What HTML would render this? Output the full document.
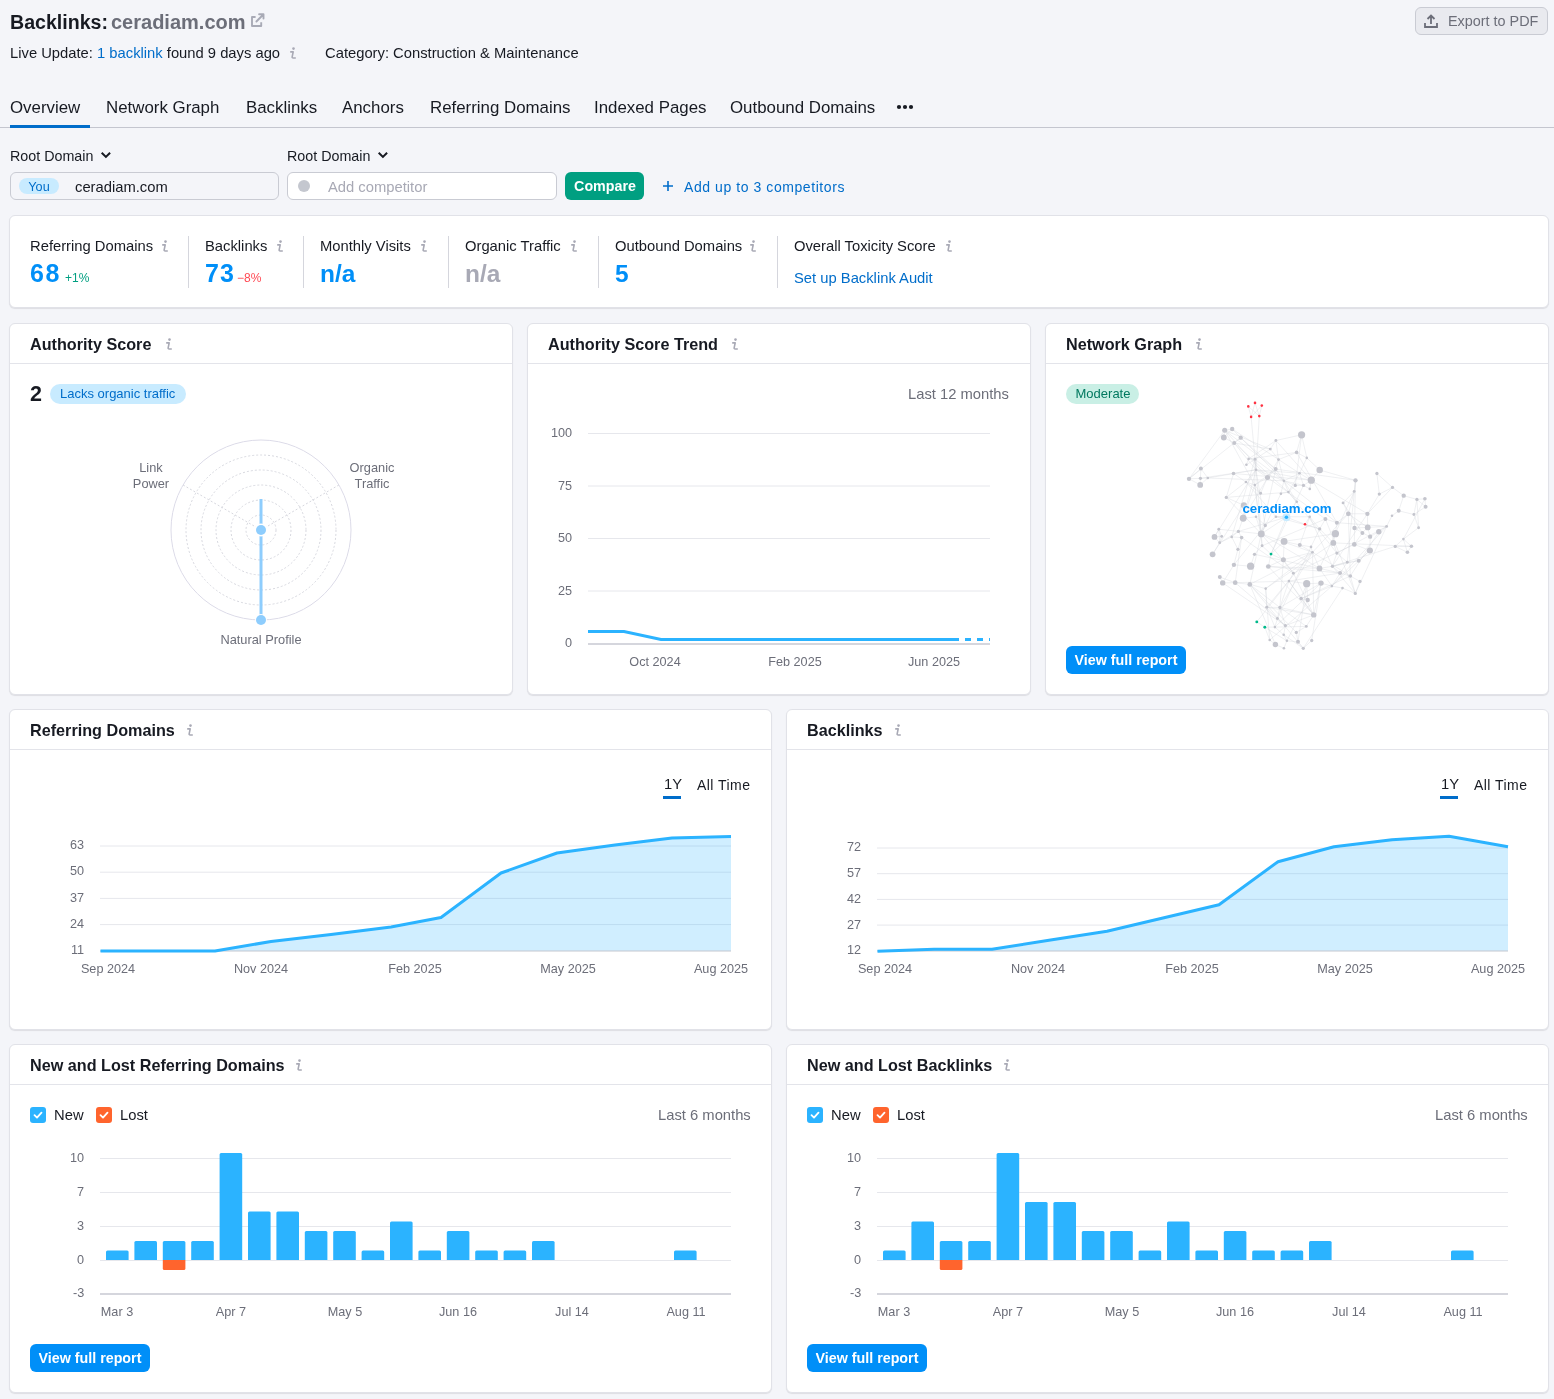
<!DOCTYPE html><html><head><meta charset="utf-8"><style>
html,body{margin:0;padding:0;}
body{width:1554px;height:1399px;background:#f4f5f9;position:relative;overflow:hidden;font-family:"Liberation Sans",sans-serif;}
.t{position:absolute;white-space:nowrap;will-change:transform;}
.a{position:absolute;}
.card{position:absolute;background:#fff;border:1px solid #e1e2e8;border-radius:6px;box-shadow:0 1px 1px rgba(25,27,35,0.10);}
</style></head><body>
<div class="t" style="left:10px;top:10.71px;font-size:19.60px;line-height:23px;color:#171a22;font-weight:700;letter-spacing:0.0px;">Backlinks:</div>
<div class="t" style="left:111px;top:10.57px;font-size:20.00px;line-height:23px;color:#6c6e79;font-weight:700;letter-spacing:0.0px;">ceradiam.com</div>
<svg class="a" style="left:245px;top:8px" width="25" height="22" viewBox="245 8 25 22"><path d="M255.6 17 H252 V26 H261.2 V22.3" fill="none" stroke="#a8aab6" stroke-width="1.9" stroke-linejoin="round"/><path d="M256.4 21.5 L262.8 15 M259.1 14.3 H263.5 V18.6" fill="none" stroke="#a8aab6" stroke-width="1.9" stroke-linecap="round" stroke-linejoin="round"/></svg>
<div class="t" style="left:10px;top:45.38px;font-size:14.77px;line-height:17px;color:#171a22;font-weight:400;letter-spacing:0.0px;">Live Update: <span style="color:#006dca">1 backlink</span> found 9 days ago</div>
<svg class="a" style="left:289px;top:47px" width="9" height="13" viewBox="-1 0 9 13"><circle cx="3.5" cy="1.6" r="1.3" fill="#a8a9b5"/><path d="M0.2 4.9 H3.2 L2.2 9.6 Q1.9 11 3.2 11 H5.8" fill="none" stroke="#a8a9b5" stroke-width="1.6" stroke-linejoin="round"/></svg>
<div class="t" style="left:325px;top:45.38px;font-size:14.77px;line-height:17px;color:#171a22;font-weight:400;letter-spacing:0.0px;">Category: Construction &amp; Maintenance</div>
<div class="a" style="left:1415px;top:7px;width:131px;height:26px;border:1px solid #c9cbd3;border-radius:6px;background:#e9eaef"></div>
<svg class="a" style="left:1423px;top:13px" width="16" height="16" viewBox="0 0 16 16"><path d="M8 11 V2.5 M4.5 6 L8 2.5 L11.5 6" fill="none" stroke="#6c6e79" stroke-width="1.8"/><path d="M2 10 V14 H14 V10" fill="none" stroke="#6c6e79" stroke-width="1.8"/></svg>
<div class="t" style="left:1448px;top:12.51px;font-size:14.40px;line-height:17px;color:#6c6e79;font-weight:400;letter-spacing:0.0px;">Export to PDF</div>
<div class="t" style="left:10px;top:97.65px;font-size:16.88px;line-height:19px;color:#171a22;font-weight:400;letter-spacing:0.0px;">Overview</div>
<div class="t" style="left:106px;top:97.65px;font-size:16.88px;line-height:19px;color:#171a22;font-weight:400;letter-spacing:0.0px;">Network Graph</div>
<div class="t" style="left:246px;top:97.65px;font-size:16.88px;line-height:19px;color:#171a22;font-weight:400;letter-spacing:0.0px;">Backlinks</div>
<div class="t" style="left:342px;top:97.65px;font-size:16.88px;line-height:19px;color:#171a22;font-weight:400;letter-spacing:0.0px;">Anchors</div>
<div class="t" style="left:430px;top:97.65px;font-size:16.88px;line-height:19px;color:#171a22;font-weight:400;letter-spacing:0.0px;">Referring Domains</div>
<div class="t" style="left:594px;top:97.65px;font-size:16.88px;line-height:19px;color:#171a22;font-weight:400;letter-spacing:0.0px;">Indexed Pages</div>
<div class="t" style="left:730px;top:97.65px;font-size:16.88px;line-height:19px;color:#171a22;font-weight:400;letter-spacing:0.0px;">Outbound Domains</div>
<svg class="a" style="left:896px;top:104px" width="18" height="6" viewBox="0 0 18 6"><circle cx="3" cy="3" r="2.1" fill="#171a22"/><circle cx="9" cy="3" r="2.1" fill="#171a22"/><circle cx="15" cy="3" r="2.1" fill="#171a22"/></svg>
<div class="a" style="left:0;top:127px;width:1554px;height:1px;background:#c4c6cf"></div>
<div class="a" style="left:10px;top:125px;width:80px;height:3px;background:#006dca"></div>
<div class="t" style="left:10px;top:148.05px;font-size:14.30px;line-height:16px;color:#171a22;font-weight:400;letter-spacing:0.0px;">Root Domain</div>
<svg class="a" style="left:100px;top:151px" width="12" height="9" viewBox="0 0 12 9"><path d="M1.7 1.7 L5.9 5.9 L10.1 1.7" fill="none" stroke="#171a22" stroke-width="2"/></svg>
<div class="t" style="left:287px;top:148.05px;font-size:14.30px;line-height:16px;color:#171a22;font-weight:400;letter-spacing:0.0px;">Root Domain</div>
<svg class="a" style="left:377px;top:151px" width="12" height="9" viewBox="0 0 12 9"><path d="M1.7 1.7 L5.9 5.9 L10.1 1.7" fill="none" stroke="#171a22" stroke-width="2"/></svg>
<div class="a" style="left:10px;top:172px;width:267px;height:26px;border:1px solid #c9cbd3;border-radius:6px;background:#f4f5f9"></div>
<div class="a" style="left:19px;top:178px;width:40px;height:16px;border-radius:8px;background:#c8ebff"></div>
<div class="t" style="left:39px;transform:translateX(-50%);top:180.11px;font-size:12.66px;line-height:15px;color:#006dca;font-weight:400;letter-spacing:0.0px;">You</div>
<div class="t" style="left:75px;top:179.38px;font-size:14.77px;line-height:17px;color:#171a22;font-weight:400;letter-spacing:0.0px;">ceradiam.com</div>
<div class="a" style="left:287px;top:172px;width:268px;height:26px;border:1px solid #c9cbd3;border-radius:6px;background:#fff"></div>
<div class="a" style="left:298px;top:180px;width:12px;height:12px;border-radius:6px;background:#c4c7cf"></div>
<div class="t" style="left:328px;top:179.38px;font-size:14.77px;line-height:17px;color:#a8a9b5;font-weight:400;letter-spacing:0.0px;">Add competitor</div>
<div class="a" style="left:565px;top:172px;width:79px;height:28px;border-radius:6px;background:#009f81"></div>
<div class="t" style="left:604.5px;transform:translateX(-50%);top:178.05px;font-size:14.28px;line-height:16px;color:#fff;font-weight:700;letter-spacing:0.0px;">Compare</div>
<svg class="a" style="left:662px;top:180px" width="12" height="12" viewBox="0 0 12 12"><path d="M6 1 V11 M1 6 H11" stroke="#006dca" stroke-width="1.6"/></svg>
<div class="t" style="left:684px;top:179.15px;font-size:14.00px;line-height:16px;color:#006dca;font-weight:400;letter-spacing:0.57px;">Add up to 3 competitors</div>
<div class="card" style="left:9px;top:215px;width:1538px;height:91px"></div>
<div class="t" style="left:30px;top:238.38px;font-size:14.77px;line-height:17px;color:#171a22;font-weight:400;letter-spacing:0.0px;">Referring Domains</div>
<svg class="a" style="left:161px;top:240px" width="9" height="13" viewBox="-1 0 9 13"><circle cx="3.5" cy="1.6" r="1.3" fill="#a8a9b5"/><path d="M0.2 4.9 H3.2 L2.2 9.6 Q1.9 11 3.2 11 H5.8" fill="none" stroke="#a8a9b5" stroke-width="1.6" stroke-linejoin="round"/></svg>
<div class="t" style="left:205px;top:238.38px;font-size:14.77px;line-height:17px;color:#171a22;font-weight:400;letter-spacing:0.0px;">Backlinks</div>
<svg class="a" style="left:276px;top:240px" width="9" height="13" viewBox="-1 0 9 13"><circle cx="3.5" cy="1.6" r="1.3" fill="#a8a9b5"/><path d="M0.2 4.9 H3.2 L2.2 9.6 Q1.9 11 3.2 11 H5.8" fill="none" stroke="#a8a9b5" stroke-width="1.6" stroke-linejoin="round"/></svg>
<div class="t" style="left:320px;top:238.38px;font-size:14.77px;line-height:17px;color:#171a22;font-weight:400;letter-spacing:0.0px;">Monthly Visits</div>
<svg class="a" style="left:420px;top:240px" width="9" height="13" viewBox="-1 0 9 13"><circle cx="3.5" cy="1.6" r="1.3" fill="#a8a9b5"/><path d="M0.2 4.9 H3.2 L2.2 9.6 Q1.9 11 3.2 11 H5.8" fill="none" stroke="#a8a9b5" stroke-width="1.6" stroke-linejoin="round"/></svg>
<div class="t" style="left:465px;top:238.38px;font-size:14.77px;line-height:17px;color:#171a22;font-weight:400;letter-spacing:0.0px;">Organic Traffic</div>
<svg class="a" style="left:570px;top:240px" width="9" height="13" viewBox="-1 0 9 13"><circle cx="3.5" cy="1.6" r="1.3" fill="#a8a9b5"/><path d="M0.2 4.9 H3.2 L2.2 9.6 Q1.9 11 3.2 11 H5.8" fill="none" stroke="#a8a9b5" stroke-width="1.6" stroke-linejoin="round"/></svg>
<div class="t" style="left:615px;top:238.38px;font-size:14.77px;line-height:17px;color:#171a22;font-weight:400;letter-spacing:0.0px;">Outbound Domains</div>
<svg class="a" style="left:749px;top:240px" width="9" height="13" viewBox="-1 0 9 13"><circle cx="3.5" cy="1.6" r="1.3" fill="#a8a9b5"/><path d="M0.2 4.9 H3.2 L2.2 9.6 Q1.9 11 3.2 11 H5.8" fill="none" stroke="#a8a9b5" stroke-width="1.6" stroke-linejoin="round"/></svg>
<div class="t" style="left:794px;top:238.38px;font-size:14.77px;line-height:17px;color:#171a22;font-weight:400;letter-spacing:0.0px;">Overall Toxicity Score</div>
<svg class="a" style="left:945px;top:240px" width="9" height="13" viewBox="-1 0 9 13"><circle cx="3.5" cy="1.6" r="1.3" fill="#a8a9b5"/><path d="M0.2 4.9 H3.2 L2.2 9.6 Q1.9 11 3.2 11 H5.8" fill="none" stroke="#a8a9b5" stroke-width="1.6" stroke-linejoin="round"/></svg>
<div class="a" style="left:188px;top:236px;width:1px;height:52px;background:#d5d6dd"></div>
<div class="a" style="left:303px;top:236px;width:1px;height:52px;background:#d5d6dd"></div>
<div class="a" style="left:448px;top:236px;width:1px;height:52px;background:#d5d6dd"></div>
<div class="a" style="left:598px;top:236px;width:1px;height:52px;background:#d5d6dd"></div>
<div class="a" style="left:777px;top:236px;width:1px;height:52px;background:#d5d6dd"></div>
<div class="t" style="left:30px;top:258.84px;font-size:25.00px;line-height:29px;color:#008ff8;font-weight:700;letter-spacing:1.5px;">68</div>
<div class="t" style="left:65px;top:270.84px;font-size:12.00px;line-height:14px;color:#009f81;font-weight:400;letter-spacing:0.0px;">+1%</div>
<div class="t" style="left:205px;top:258.84px;font-size:25.00px;line-height:29px;color:#008ff8;font-weight:700;letter-spacing:1.2px;">73</div>
<div class="t" style="left:237px;top:270.84px;font-size:12.00px;line-height:14px;color:#ff4953;font-weight:400;letter-spacing:0.0px;">&minus;8%</div>
<div class="t" style="left:320px;top:259.52px;font-size:24.48px;line-height:28px;color:#008ff8;font-weight:700;letter-spacing:0.0px;">n/a</div>
<div class="t" style="left:465px;top:259.52px;font-size:24.48px;line-height:28px;color:#a8a9b5;font-weight:700;letter-spacing:0.0px;">n/a</div>
<div class="t" style="left:615px;top:259.52px;font-size:24.48px;line-height:28px;color:#008ff8;font-weight:700;letter-spacing:0.0px;">5</div>
<div class="t" style="left:794px;top:270.38px;font-size:14.77px;line-height:17px;color:#006dca;font-weight:400;letter-spacing:0.0px;">Set up Backlink Audit</div>
<div class="card" style="left:9px;top:323px;width:502px;height:370px"></div>
<div class="a" style="left:10px;top:363px;width:502px;height:1px;background:#e3e4ea"></div>
<div class="t" style="left:30px;top:334.89px;font-size:16.20px;line-height:19px;color:#171a22;font-weight:700;letter-spacing:0.0px;">Authority Score</div>
<svg class="a" style="left:165px;top:338px" width="9" height="13" viewBox="-1 0 9 13"><circle cx="3.5" cy="1.6" r="1.3" fill="#a8a9b5"/><path d="M0.2 4.9 H3.2 L2.2 9.6 Q1.9 11 3.2 11 H5.8" fill="none" stroke="#a8a9b5" stroke-width="1.6" stroke-linejoin="round"/></svg>
<div class="t" style="left:30px;top:382.05px;font-size:21.50px;line-height:25px;color:#171a22;font-weight:700;letter-spacing:0.0px;">2</div>
<div class="a" style="left:50px;top:384px;width:136px;height:20px;border-radius:10px;background:#c8ebff"></div>
<div class="t" style="left:60px;top:386.00px;font-size:13.00px;line-height:15px;color:#006dca;font-weight:400;letter-spacing:0.0px;">Lacks organic traffic</div>
<svg class="a" style="left:0;top:0" width="520" height="700" viewBox="0 0 520 700"><circle cx="261" cy="530" r="90" fill="none" stroke="#dcdbe8" stroke-width="1"/><circle cx="261" cy="530" r="75" fill="none" stroke="#d6d7de" stroke-width="1" stroke-dasharray="2 2"/><circle cx="261" cy="530" r="60" fill="none" stroke="#d6d7de" stroke-width="1" stroke-dasharray="2 2"/><circle cx="261" cy="530" r="45" fill="none" stroke="#d6d7de" stroke-width="1" stroke-dasharray="2 2"/><circle cx="261" cy="530" r="30" fill="none" stroke="#d6d7de" stroke-width="1" stroke-dasharray="2 2"/><circle cx="261" cy="530" r="15" fill="none" stroke="#d6d7de" stroke-width="1" stroke-dasharray="2 2"/><line x1="261" y1="530" x2="183.1" y2="485.0" stroke="#d6d7de" stroke-width="1" stroke-dasharray="2 2"/><line x1="261" y1="530" x2="338.9" y2="485.0" stroke="#d6d7de" stroke-width="1" stroke-dasharray="2 2"/><line x1="261" y1="499" x2="261" y2="618" stroke="#8ecdfd" stroke-width="3"/><circle cx="261" cy="530" r="6.5" fill="#fff"/><circle cx="261" cy="530" r="5" fill="#8ecdfd"/><circle cx="261" cy="620" r="6" fill="#fff"/><circle cx="261" cy="620" r="5" fill="#8ecdfd"/></svg>
<div class="t" style="left:150.5px;transform:translateX(-50%);top:460.06px;font-size:12.80px;line-height:15px;color:#6c6e79;font-weight:400;letter-spacing:0.0px;">Link</div>
<div class="t" style="left:150.5px;transform:translateX(-50%);top:476.06px;font-size:12.80px;line-height:15px;color:#6c6e79;font-weight:400;letter-spacing:0.0px;">Power</div>
<div class="t" style="left:371.5px;transform:translateX(-50%);top:460.06px;font-size:12.80px;line-height:15px;color:#6c6e79;font-weight:400;letter-spacing:0.0px;">Organic</div>
<div class="t" style="left:371.5px;transform:translateX(-50%);top:476.06px;font-size:12.80px;line-height:15px;color:#6c6e79;font-weight:400;letter-spacing:0.0px;">Traffic</div>
<div class="t" style="left:261px;transform:translateX(-50%);top:632.06px;font-size:12.80px;line-height:15px;color:#6c6e79;font-weight:400;letter-spacing:0.0px;">Natural Profile</div>
<div class="card" style="left:527px;top:323px;width:502px;height:370px"></div>
<div class="a" style="left:528px;top:363px;width:502px;height:1px;background:#e3e4ea"></div>
<div class="t" style="left:548px;top:334.89px;font-size:16.20px;line-height:19px;color:#171a22;font-weight:700;letter-spacing:0.0px;">Authority Score Trend</div>
<svg class="a" style="left:731px;top:338px" width="9" height="13" viewBox="-1 0 9 13"><circle cx="3.5" cy="1.6" r="1.3" fill="#a8a9b5"/><path d="M0.2 4.9 H3.2 L2.2 9.6 Q1.9 11 3.2 11 H5.8" fill="none" stroke="#a8a9b5" stroke-width="1.6" stroke-linejoin="round"/></svg>
<div class="t" style="right:545px;top:386.38px;font-size:14.77px;line-height:17px;color:#6c6e79;font-weight:400;letter-spacing:0.0px;">Last 12 months</div>
<svg class="a" style="left:0;top:0" width="1040" height="700" viewBox="0 0 1040 700"><line x1="588" y1="433.5" x2="990" y2="433.5" stroke="#e6e7ec" stroke-width="1"/><line x1="588" y1="486" x2="990" y2="486" stroke="#e6e7ec" stroke-width="1"/><line x1="588" y1="538.5" x2="990" y2="538.5" stroke="#e6e7ec" stroke-width="1"/><line x1="588" y1="591" x2="990" y2="591" stroke="#e6e7ec" stroke-width="1"/><line x1="588" y1="644" x2="990" y2="644" stroke="#d5d6dd" stroke-width="2"/><polyline points="588,631.5 624,631.5 661,639.5 953,639.5" fill="none" stroke="#2bb3ff" stroke-width="3"/><line x1="953" y1="639.5" x2="990" y2="639.5" stroke="#2bb3ff" stroke-width="3" stroke-dasharray="6 6"/></svg>
<div class="t" style="right:982px;top:426.11px;font-size:12.66px;line-height:15px;color:#6c6e79;font-weight:400;letter-spacing:0.0px;">100</div>
<div class="t" style="right:982px;top:479.11px;font-size:12.66px;line-height:15px;color:#6c6e79;font-weight:400;letter-spacing:0.0px;">75</div>
<div class="t" style="right:982px;top:531.11px;font-size:12.66px;line-height:15px;color:#6c6e79;font-weight:400;letter-spacing:0.0px;">50</div>
<div class="t" style="right:982px;top:584.11px;font-size:12.66px;line-height:15px;color:#6c6e79;font-weight:400;letter-spacing:0.0px;">25</div>
<div class="t" style="right:982px;top:636.11px;font-size:12.66px;line-height:15px;color:#6c6e79;font-weight:400;letter-spacing:0.0px;">0</div>
<div class="t" style="left:655px;transform:translateX(-50%);top:655.11px;font-size:12.66px;line-height:15px;color:#6c6e79;font-weight:400;letter-spacing:0.0px;">Oct 2024</div>
<div class="t" style="left:794.5px;transform:translateX(-50%);top:655.11px;font-size:12.66px;line-height:15px;color:#6c6e79;font-weight:400;letter-spacing:0.0px;">Feb 2025</div>
<div class="t" style="left:934px;transform:translateX(-50%);top:655.11px;font-size:12.66px;line-height:15px;color:#6c6e79;font-weight:400;letter-spacing:0.0px;">Jun 2025</div>
<div class="card" style="left:1045px;top:323px;width:502px;height:370px"></div>
<div class="a" style="left:1046px;top:363px;width:502px;height:1px;background:#e3e4ea"></div>
<div class="t" style="left:1066px;top:334.89px;font-size:16.20px;line-height:19px;color:#171a22;font-weight:700;letter-spacing:0.0px;">Network Graph</div>
<svg class="a" style="left:1195px;top:338px" width="9" height="13" viewBox="-1 0 9 13"><circle cx="3.5" cy="1.6" r="1.3" fill="#a8a9b5"/><path d="M0.2 4.9 H3.2 L2.2 9.6 Q1.9 11 3.2 11 H5.8" fill="none" stroke="#a8a9b5" stroke-width="1.6" stroke-linejoin="round"/></svg>
<div class="a" style="left:1066px;top:384px;width:73px;height:20px;border-radius:10px;background:#c9efe5"></div>
<div class="t" style="left:1102.5px;transform:translateX(-50%);top:386.00px;font-size:13.00px;line-height:15px;color:#00785f;font-weight:400;letter-spacing:0.0px;">Moderate</div>
<div class="a" style="left:1066px;top:646px;width:120px;height:28px;border-radius:6px;background:#008ff8"></div>
<div class="t" style="left:1126px;transform:translateX(-50%);top:652.05px;font-size:14.28px;line-height:16px;color:#fff;font-weight:700;letter-spacing:0.0px;">View full report</div>
<svg class="a" style="left:1046px;top:364px" width="502" height="330" viewBox="1046 364 502 330"><g stroke="#cfd0d8" stroke-width="0.6" stroke-opacity="0.55"><line x1="1255.0" y1="459.3" x2="1256.0" y2="469.8"/><line x1="1367.7" y1="527.4" x2="1386.6" y2="526.4"/><line x1="1256.0" y1="516.8" x2="1265.3" y2="525.5"/><line x1="1240.7" y1="437.7" x2="1234.2" y2="443.0"/><line x1="1386.6" y1="526.4" x2="1331.9" y2="586.1"/><line x1="1275.9" y1="440.5" x2="1248.6" y2="458.9"/><line x1="1271.0" y1="554.1" x2="1283.4" y2="559.7"/><line x1="1256.0" y1="469.8" x2="1265.3" y2="525.5"/><line x1="1283.9" y1="480.8" x2="1280.9" y2="493.7"/><line x1="1376.9" y1="473.5" x2="1379.3" y2="494.1"/><line x1="1274.9" y1="627.1" x2="1306.3" y2="626.4"/><line x1="1248.6" y1="458.9" x2="1255.0" y2="459.3"/><line x1="1275.7" y1="469.1" x2="1267.5" y2="477.5"/><line x1="1378.8" y1="531.7" x2="1370.1" y2="536.7"/><line x1="1312.5" y1="552.3" x2="1319.5" y2="568.4"/><line x1="1268.3" y1="566.5" x2="1319.5" y2="568.4"/><line x1="1312.5" y1="552.3" x2="1249.8" y2="584.4"/><line x1="1369.9" y1="550.5" x2="1331.9" y2="586.1"/><line x1="1319.5" y1="568.4" x2="1332.4" y2="566.3"/><line x1="1336.9" y1="553.1" x2="1332.4" y2="566.3"/><line x1="1243.9" y1="505.4" x2="1212.6" y2="554.3"/><line x1="1267.5" y1="477.5" x2="1325.4" y2="519.0"/><line x1="1218.8" y1="529.2" x2="1214.5" y2="536.9"/><line x1="1354.2" y1="491.4" x2="1319.5" y2="568.4"/><line x1="1403.7" y1="495.7" x2="1416.9" y2="499.4"/><line x1="1331.9" y1="586.1" x2="1269.7" y2="640.0"/><line x1="1340.1" y1="573.0" x2="1288.9" y2="581.1"/><line x1="1275.7" y1="469.1" x2="1254.8" y2="485.0"/><line x1="1222.7" y1="582.9" x2="1235.2" y2="582.7"/><line x1="1312.5" y1="552.3" x2="1350.3" y2="576.0"/><line x1="1348.3" y1="513.8" x2="1367.4" y2="513.8"/><line x1="1403.4" y1="539.1" x2="1411.4" y2="546.3"/><line x1="1265.7" y1="588.6" x2="1266.7" y2="607.3"/><line x1="1321.0" y1="583.1" x2="1311.7" y2="640.5"/><line x1="1232.2" y1="429.0" x2="1299.5" y2="473.3"/><line x1="1309.7" y1="516.8" x2="1305.0" y2="524.3"/><line x1="1301.6" y1="434.8" x2="1306.8" y2="457.9"/><line x1="1309.7" y1="516.8" x2="1332.4" y2="566.3"/><line x1="1379.3" y1="494.1" x2="1367.4" y2="513.8"/><line x1="1238.4" y1="531.4" x2="1219.7" y2="542.8"/><line x1="1234.2" y1="443.0" x2="1288.4" y2="492.1"/><line x1="1283.7" y1="634.8" x2="1303.3" y2="648.3"/><line x1="1299.5" y1="473.3" x2="1303.5" y2="485.4"/><line x1="1256.0" y1="469.8" x2="1245.9" y2="482.0"/><line x1="1219.8" y1="577.1" x2="1222.7" y2="582.9"/><line x1="1285.4" y1="625.6" x2="1283.7" y2="634.8"/><line x1="1248.6" y1="458.9" x2="1246.4" y2="464.8"/><line x1="1301.1" y1="598.6" x2="1313.7" y2="614.9"/><line x1="1312.5" y1="552.3" x2="1283.4" y2="559.7"/><line x1="1268.3" y1="566.5" x2="1340.1" y2="573.0"/><line x1="1265.3" y1="525.5" x2="1233.9" y2="564.8"/><line x1="1306.8" y1="457.9" x2="1299.5" y2="473.3"/><line x1="1386.6" y1="526.4" x2="1378.8" y2="531.7"/><line x1="1403.4" y1="539.1" x2="1395.2" y2="546.4"/><line x1="1283.7" y1="634.8" x2="1286.9" y2="640.8"/><line x1="1321.0" y1="583.1" x2="1331.9" y2="586.1"/><line x1="1313.7" y1="614.9" x2="1306.3" y2="626.4"/><line x1="1298.0" y1="641.8" x2="1303.3" y2="648.3"/><line x1="1256.0" y1="469.8" x2="1207.8" y2="478.0"/><line x1="1331.9" y1="586.1" x2="1342.5" y2="588.1"/><line x1="1261.8" y1="405.6" x2="1251.1" y2="416.9"/><line x1="1325.4" y1="519.0" x2="1336.9" y2="522.7"/><line x1="1299.8" y1="544.9" x2="1312.5" y2="552.3"/><line x1="1311.0" y1="546.9" x2="1312.5" y2="552.3"/><line x1="1347.3" y1="562.3" x2="1332.4" y2="566.3"/><line x1="1340.1" y1="573.0" x2="1331.9" y2="586.1"/><line x1="1392.0" y1="515.8" x2="1386.6" y2="526.4"/><line x1="1189.0" y1="478.8" x2="1200.2" y2="484.9"/><line x1="1425.6" y1="506.8" x2="1413.9" y2="514.5"/><line x1="1303.5" y1="485.4" x2="1309.8" y2="488.9"/><line x1="1265.3" y1="525.5" x2="1261.3" y2="533.9"/><line x1="1279.9" y1="607.5" x2="1313.7" y2="614.9"/><line x1="1296.6" y1="452.4" x2="1336.9" y2="522.7"/><line x1="1224.7" y1="430.3" x2="1275.7" y2="469.1"/><line x1="1386.6" y1="526.4" x2="1336.9" y2="553.1"/><line x1="1256.0" y1="469.8" x2="1311.3" y2="480.2"/><line x1="1301.6" y1="434.8" x2="1275.9" y2="440.5"/><line x1="1347.3" y1="562.3" x2="1358.7" y2="560.7"/><line x1="1279.9" y1="607.5" x2="1285.4" y2="625.6"/><line x1="1354.2" y1="491.4" x2="1348.3" y2="513.8"/><line x1="1249.8" y1="584.4" x2="1275.4" y2="644.5"/><line x1="1416.9" y1="499.4" x2="1425.6" y2="506.8"/><line x1="1367.4" y1="513.8" x2="1332.4" y2="566.3"/><line x1="1267.5" y1="477.5" x2="1260.6" y2="493.2"/><line x1="1354.3" y1="544.4" x2="1293.4" y2="573.2"/><line x1="1416.9" y1="499.4" x2="1418.6" y2="527.7"/><line x1="1231.7" y1="536.9" x2="1237.9" y2="549.3"/><line x1="1283.4" y1="559.7" x2="1268.3" y2="566.5"/><line x1="1319.7" y1="470.0" x2="1355.5" y2="480.3"/><line x1="1299.8" y1="544.9" x2="1311.0" y2="546.9"/><line x1="1296.6" y1="452.4" x2="1306.8" y2="457.9"/><line x1="1278.5" y1="459.6" x2="1275.7" y2="469.1"/><line x1="1367.4" y1="513.8" x2="1367.7" y2="527.4"/><line x1="1249.8" y1="584.4" x2="1279.9" y2="607.5"/><line x1="1332.4" y1="566.3" x2="1355.3" y2="593.4"/><line x1="1224.7" y1="430.3" x2="1270.3" y2="449.1"/><line x1="1306.8" y1="457.9" x2="1319.7" y2="470.0"/><line x1="1319.7" y1="528.9" x2="1305.0" y2="524.3"/><line x1="1237.9" y1="549.3" x2="1233.9" y2="564.8"/><line x1="1286.9" y1="640.8" x2="1283.9" y2="648.2"/><line x1="1264.8" y1="627.2" x2="1286.9" y2="640.8"/><line x1="1231.7" y1="536.9" x2="1219.7" y2="542.8"/><line x1="1336.9" y1="522.7" x2="1335.4" y2="533.7"/><line x1="1306.3" y1="626.4" x2="1296.3" y2="632.4"/><line x1="1224.7" y1="430.3" x2="1223.8" y2="437.5"/><line x1="1279.9" y1="607.5" x2="1277.4" y2="618.5"/><line x1="1416.9" y1="499.4" x2="1424.9" y2="498.8"/><line x1="1264.8" y1="627.2" x2="1274.9" y2="627.1"/><line x1="1348.3" y1="513.8" x2="1350.3" y2="576.0"/><line x1="1311.3" y1="480.2" x2="1309.8" y2="488.9"/><line x1="1424.9" y1="498.8" x2="1425.6" y2="506.8"/><line x1="1284.1" y1="541.4" x2="1299.8" y2="544.9"/><line x1="1270.3" y1="449.1" x2="1255.0" y2="459.3"/><line x1="1284.1" y1="541.4" x2="1283.4" y2="559.7"/><line x1="1275.9" y1="516.7" x2="1265.3" y2="525.5"/><line x1="1288.4" y1="492.1" x2="1296.8" y2="501.8"/><line x1="1245.9" y1="482.0" x2="1260.6" y2="493.2"/><line x1="1277.4" y1="618.5" x2="1274.9" y2="627.1"/><line x1="1235.2" y1="582.7" x2="1249.8" y2="584.4"/><line x1="1295.3" y1="485.4" x2="1288.4" y2="492.1"/><line x1="1296.6" y1="452.4" x2="1278.5" y2="459.6"/><line x1="1392.5" y1="487.4" x2="1403.7" y2="495.7"/><line x1="1189.0" y1="478.8" x2="1200.4" y2="478.3"/><line x1="1249.8" y1="584.4" x2="1265.7" y2="588.6"/><line x1="1378.8" y1="531.7" x2="1350.3" y2="576.0"/><line x1="1243.9" y1="505.4" x2="1243.2" y2="518.3"/><line x1="1395.2" y1="546.4" x2="1411.4" y2="546.3"/><line x1="1264.8" y1="627.2" x2="1269.7" y2="640.0"/><line x1="1240.7" y1="437.7" x2="1275.7" y2="469.1"/><line x1="1395.2" y1="546.4" x2="1332.4" y2="566.3"/><line x1="1411.4" y1="546.3" x2="1407.4" y2="552.3"/><line x1="1350.3" y1="576.0" x2="1355.3" y2="593.4"/><line x1="1226.3" y1="497.4" x2="1261.3" y2="533.9"/><line x1="1256.0" y1="469.8" x2="1214.5" y2="536.9"/><line x1="1245.9" y1="482.0" x2="1254.8" y2="485.0"/><line x1="1275.4" y1="644.5" x2="1283.9" y2="648.2"/><line x1="1261.3" y1="533.9" x2="1293.4" y2="573.2"/><line x1="1325.4" y1="519.0" x2="1355.3" y2="593.4"/><line x1="1224.7" y1="430.3" x2="1232.2" y2="429.0"/><line x1="1319.5" y1="568.4" x2="1331.9" y2="586.1"/><line x1="1256.0" y1="516.8" x2="1261.3" y2="533.9"/><line x1="1218.8" y1="529.2" x2="1261.3" y2="533.9"/><line x1="1248.3" y1="406.4" x2="1259.3" y2="416.1"/><line x1="1200.9" y1="468.6" x2="1207.8" y2="478.0"/><line x1="1311.3" y1="480.2" x2="1303.5" y2="485.4"/><line x1="1256.0" y1="469.8" x2="1261.3" y2="533.9"/><line x1="1261.3" y1="533.9" x2="1312.5" y2="552.3"/><line x1="1307.7" y1="600.0" x2="1286.9" y2="640.8"/><line x1="1255.0" y1="402.9" x2="1259.3" y2="416.1"/><line x1="1342.5" y1="588.1" x2="1355.3" y2="593.4"/><line x1="1392.5" y1="487.4" x2="1379.3" y2="494.1"/><line x1="1392.5" y1="487.4" x2="1367.4" y2="513.8"/><line x1="1207.8" y1="478.0" x2="1283.9" y2="480.8"/><line x1="1255.0" y1="459.3" x2="1283.9" y2="480.8"/><line x1="1303.5" y1="485.4" x2="1271.0" y2="554.1"/><line x1="1256.0" y1="469.8" x2="1243.2" y2="518.3"/><line x1="1283.9" y1="480.8" x2="1296.8" y2="501.8"/><line x1="1398.7" y1="510.8" x2="1392.0" y2="515.8"/><line x1="1362.4" y1="532.9" x2="1354.3" y2="544.4"/><line x1="1262.1" y1="545.8" x2="1271.0" y2="554.1"/><line x1="1254.8" y1="485.0" x2="1261.3" y2="533.9"/><line x1="1333.3" y1="542.9" x2="1336.9" y2="553.1"/><line x1="1222.7" y1="582.9" x2="1285.4" y2="625.6"/><line x1="1268.3" y1="566.5" x2="1313.7" y2="614.9"/><line x1="1312.5" y1="552.3" x2="1313.7" y2="614.9"/><line x1="1336.9" y1="553.1" x2="1347.3" y2="562.3"/><line x1="1367.7" y1="527.4" x2="1370.1" y2="536.7"/><line x1="1254.5" y1="554.3" x2="1319.5" y2="568.4"/><line x1="1266.7" y1="607.3" x2="1274.9" y2="627.1"/><line x1="1288.9" y1="581.1" x2="1256.8" y2="621.9"/><line x1="1248.3" y1="406.4" x2="1251.1" y2="416.9"/><line x1="1299.5" y1="473.3" x2="1288.4" y2="492.1"/><line x1="1403.7" y1="495.7" x2="1398.7" y2="510.8"/><line x1="1275.9" y1="440.5" x2="1270.3" y2="449.1"/><line x1="1200.9" y1="468.6" x2="1200.4" y2="478.3"/><line x1="1226.3" y1="497.4" x2="1243.9" y2="505.4"/><line x1="1275.9" y1="440.5" x2="1311.3" y2="480.2"/><line x1="1336.9" y1="522.7" x2="1386.6" y2="526.4"/><line x1="1301.6" y1="434.8" x2="1295.3" y2="485.4"/><line x1="1376.9" y1="473.5" x2="1392.5" y2="487.4"/><line x1="1283.9" y1="480.8" x2="1336.9" y2="522.7"/><line x1="1311.0" y1="546.9" x2="1277.4" y2="618.5"/><line x1="1254.8" y1="485.0" x2="1238.4" y2="531.4"/><line x1="1255.0" y1="459.3" x2="1254.8" y2="485.0"/><line x1="1266.7" y1="607.3" x2="1313.7" y2="614.9"/><line x1="1288.9" y1="581.1" x2="1301.1" y2="598.6"/><line x1="1256.8" y1="621.9" x2="1264.8" y2="627.2"/><line x1="1214.5" y1="536.9" x2="1219.7" y2="542.8"/><line x1="1386.6" y1="526.4" x2="1355.3" y2="593.4"/><line x1="1275.9" y1="440.5" x2="1278.5" y2="459.6"/><line x1="1418.6" y1="527.7" x2="1403.4" y2="539.1"/><line x1="1241.6" y1="537.6" x2="1237.9" y2="549.3"/><line x1="1350.3" y1="576.0" x2="1360.0" y2="581.4"/><line x1="1241.6" y1="537.6" x2="1235.2" y2="582.7"/><line x1="1200.4" y1="478.3" x2="1200.2" y2="484.9"/><line x1="1274.9" y1="627.1" x2="1283.7" y2="634.8"/><line x1="1354.5" y1="528.0" x2="1362.4" y2="532.9"/><line x1="1312.5" y1="552.3" x2="1279.9" y2="607.5"/><line x1="1255.0" y1="459.3" x2="1246.4" y2="464.8"/><line x1="1348.3" y1="513.8" x2="1336.9" y2="522.7"/><line x1="1319.5" y1="568.4" x2="1340.1" y2="573.0"/><line x1="1288.9" y1="581.1" x2="1306.7" y2="583.7"/><line x1="1214.5" y1="536.9" x2="1221.7" y2="536.4"/><line x1="1256.0" y1="469.8" x2="1200.4" y2="478.3"/><line x1="1299.5" y1="473.3" x2="1367.4" y2="513.8"/><line x1="1311.7" y1="640.5" x2="1303.3" y2="648.3"/><line x1="1424.9" y1="498.8" x2="1403.4" y2="539.1"/><line x1="1340.1" y1="573.0" x2="1350.3" y2="576.0"/><line x1="1283.9" y1="480.8" x2="1303.5" y2="485.4"/><line x1="1261.3" y1="533.9" x2="1262.1" y2="545.8"/><line x1="1288.4" y1="492.1" x2="1336.9" y2="553.1"/><line x1="1251.1" y1="416.9" x2="1256.0" y2="469.8"/><line x1="1358.7" y1="560.7" x2="1332.4" y2="566.3"/><line x1="1355.5" y1="480.3" x2="1354.5" y2="528.0"/><line x1="1278.5" y1="459.6" x2="1243.2" y2="518.3"/><line x1="1267.5" y1="477.5" x2="1254.8" y2="485.0"/><line x1="1223.8" y1="437.5" x2="1234.2" y2="443.0"/><line x1="1348.3" y1="513.8" x2="1367.7" y2="527.4"/><line x1="1265.7" y1="588.6" x2="1269.7" y2="640.0"/><line x1="1321.0" y1="583.1" x2="1274.9" y2="627.1"/><line x1="1299.5" y1="473.3" x2="1283.9" y2="480.8"/><line x1="1309.7" y1="516.8" x2="1319.7" y2="528.9"/><line x1="1256.0" y1="469.8" x2="1299.5" y2="473.3"/><line x1="1309.7" y1="516.8" x2="1299.8" y2="544.9"/><line x1="1200.4" y1="478.3" x2="1207.8" y2="478.0"/><line x1="1245.9" y1="482.0" x2="1275.9" y2="516.7"/><line x1="1362.4" y1="532.9" x2="1370.1" y2="536.7"/><line x1="1312.5" y1="552.3" x2="1265.7" y2="588.6"/><line x1="1319.7" y1="528.9" x2="1333.3" y2="542.9"/><line x1="1232.2" y1="429.0" x2="1240.7" y2="437.7"/><line x1="1319.7" y1="528.9" x2="1311.0" y2="546.9"/><line x1="1313.7" y1="614.9" x2="1285.4" y2="625.6"/><line x1="1293.4" y1="573.2" x2="1313.7" y2="614.9"/><line x1="1321.0" y1="583.1" x2="1313.7" y2="614.9"/><line x1="1254.5" y1="554.3" x2="1250.6" y2="566.2"/><line x1="1256.0" y1="469.8" x2="1283.9" y2="480.8"/><line x1="1335.4" y1="533.7" x2="1333.3" y2="542.9"/><line x1="1296.3" y1="632.4" x2="1298.0" y2="641.8"/><line x1="1249.8" y1="584.4" x2="1296.3" y2="632.4"/><line x1="1238.4" y1="531.4" x2="1241.6" y2="537.6"/><line x1="1403.4" y1="539.1" x2="1407.4" y2="552.3"/><line x1="1255.0" y1="459.3" x2="1231.7" y2="536.9"/><line x1="1280.9" y1="493.7" x2="1261.3" y2="533.9"/><line x1="1243.2" y1="518.3" x2="1256.0" y2="516.8"/><line x1="1256.0" y1="469.8" x2="1267.5" y2="477.5"/><line x1="1283.4" y1="559.7" x2="1293.4" y2="573.2"/><line x1="1331.9" y1="586.1" x2="1301.1" y2="598.6"/><line x1="1283.4" y1="559.7" x2="1279.9" y2="607.5"/><line x1="1325.4" y1="519.0" x2="1319.7" y2="528.9"/><line x1="1347.3" y1="562.3" x2="1340.1" y2="573.0"/><line x1="1301.1" y1="598.6" x2="1307.7" y2="600.0"/><line x1="1369.9" y1="550.5" x2="1358.7" y2="560.7"/><line x1="1224.7" y1="430.3" x2="1189.0" y2="478.8"/><line x1="1293.4" y1="573.2" x2="1288.9" y2="581.1"/><line x1="1232.2" y1="429.0" x2="1223.8" y2="437.5"/><line x1="1321.0" y1="583.1" x2="1279.9" y2="607.5"/><line x1="1343.1" y1="502.9" x2="1354.2" y2="491.4"/><line x1="1343.1" y1="502.9" x2="1348.3" y2="513.8"/><line x1="1284.1" y1="541.4" x2="1271.0" y2="554.1"/><line x1="1286.4" y1="517.2" x2="1271.0" y2="554.1"/><line x1="1219.8" y1="577.1" x2="1235.2" y2="582.7"/><line x1="1288.4" y1="492.1" x2="1226.3" y2="497.4"/><line x1="1343.1" y1="502.9" x2="1362.4" y2="532.9"/><line x1="1301.6" y1="434.8" x2="1296.6" y2="452.4"/><line x1="1277.4" y1="618.5" x2="1285.4" y2="625.6"/><line x1="1254.8" y1="485.0" x2="1260.6" y2="493.2"/><line x1="1413.9" y1="514.5" x2="1418.6" y2="527.7"/><line x1="1355.5" y1="480.3" x2="1354.2" y2="491.4"/><line x1="1275.7" y1="469.1" x2="1261.3" y2="533.9"/><line x1="1279.9" y1="607.5" x2="1306.3" y2="626.4"/><line x1="1249.8" y1="584.4" x2="1303.3" y2="648.3"/><line x1="1416.9" y1="499.4" x2="1413.9" y2="514.5"/><line x1="1224.7" y1="430.3" x2="1267.5" y2="477.5"/><line x1="1238.4" y1="531.4" x2="1231.7" y2="536.9"/><line x1="1233.5" y1="473.5" x2="1245.9" y2="482.0"/><line x1="1245.9" y1="482.0" x2="1226.3" y2="497.4"/><line x1="1233.5" y1="473.5" x2="1226.3" y2="497.4"/><line x1="1261.8" y1="405.6" x2="1259.3" y2="416.1"/><line x1="1360.0" y1="581.4" x2="1355.3" y2="593.4"/><line x1="1278.5" y1="459.6" x2="1283.9" y2="480.8"/><line x1="1280.9" y1="493.7" x2="1288.4" y2="492.1"/><line x1="1234.2" y1="443.0" x2="1270.3" y2="449.1"/><line x1="1234.2" y1="443.0" x2="1256.0" y2="469.8"/><line x1="1224.7" y1="430.3" x2="1254.8" y2="485.0"/><line x1="1286.4" y1="517.2" x2="1305.0" y2="524.3"/><line x1="1286.4" y1="517.2" x2="1261.3" y2="533.9"/><line x1="1306.7" y1="583.7" x2="1298.0" y2="641.8"/><line x1="1275.9" y1="516.7" x2="1286.4" y2="517.2"/><line x1="1233.9" y1="564.8" x2="1250.6" y2="566.2"/><line x1="1233.9" y1="564.8" x2="1222.7" y2="582.9"/><line x1="1255.0" y1="402.9" x2="1251.1" y2="416.9"/><line x1="1370.1" y1="536.7" x2="1369.9" y2="550.5"/><line x1="1296.6" y1="452.4" x2="1248.6" y2="458.9"/><line x1="1235.2" y1="582.7" x2="1285.4" y2="625.6"/><line x1="1286.9" y1="640.8" x2="1298.0" y2="641.8"/><line x1="1348.3" y1="513.8" x2="1312.5" y2="552.3"/><line x1="1231.7" y1="536.9" x2="1241.6" y2="537.6"/><line x1="1286.4" y1="517.2" x2="1238.4" y2="531.4"/><line x1="1306.7" y1="583.7" x2="1307.7" y2="600.0"/><line x1="1398.7" y1="510.8" x2="1413.9" y2="514.5"/><line x1="1233.5" y1="473.5" x2="1311.3" y2="480.2"/><line x1="1296.8" y1="501.8" x2="1286.4" y2="517.2"/><line x1="1261.3" y1="533.9" x2="1319.5" y2="568.4"/><line x1="1235.2" y1="582.7" x2="1288.9" y2="581.1"/><line x1="1261.3" y1="533.9" x2="1249.8" y2="584.4"/><line x1="1262.1" y1="545.8" x2="1254.5" y2="554.3"/><line x1="1207.8" y1="478.0" x2="1200.2" y2="484.9"/><line x1="1354.3" y1="544.4" x2="1369.9" y2="550.5"/><line x1="1221.7" y1="536.4" x2="1219.7" y2="542.8"/><line x1="1288.9" y1="581.1" x2="1313.7" y2="614.9"/><line x1="1200.9" y1="468.6" x2="1189.0" y2="478.8"/><line x1="1240.7" y1="437.7" x2="1189.0" y2="478.8"/><line x1="1240.7" y1="437.7" x2="1283.9" y2="480.8"/><line x1="1306.7" y1="583.7" x2="1321.0" y2="583.1"/><line x1="1275.9" y1="516.7" x2="1309.7" y2="516.8"/><line x1="1319.7" y1="470.0" x2="1311.3" y2="480.2"/><line x1="1275.7" y1="469.1" x2="1355.5" y2="480.3"/><line x1="1333.3" y1="542.9" x2="1411.4" y2="546.3"/><line x1="1354.5" y1="528.0" x2="1354.3" y2="544.4"/><line x1="1254.8" y1="485.0" x2="1262.1" y2="545.8"/><line x1="1332.4" y1="566.3" x2="1340.1" y2="573.0"/><line x1="1355.5" y1="480.3" x2="1347.3" y2="562.3"/><line x1="1333.3" y1="542.9" x2="1265.7" y2="588.6"/><line x1="1266.7" y1="607.3" x2="1279.9" y2="607.5"/><line x1="1218.8" y1="529.2" x2="1219.7" y2="542.8"/><line x1="1219.7" y1="542.8" x2="1212.6" y2="554.3"/><line x1="1306.7" y1="583.7" x2="1301.1" y2="598.6"/><line x1="1284.1" y1="541.4" x2="1335.4" y2="533.7"/><line x1="1283.9" y1="480.8" x2="1288.4" y2="492.1"/><line x1="1270.3" y1="449.1" x2="1278.5" y2="459.6"/><line x1="1275.9" y1="516.7" x2="1319.7" y2="528.9"/><line x1="1325.4" y1="519.0" x2="1262.1" y2="545.8"/><line x1="1259.3" y1="416.1" x2="1256.0" y2="469.8"/><line x1="1342.5" y1="588.1" x2="1303.3" y2="648.3"/><line x1="1312.5" y1="552.3" x2="1266.7" y2="607.3"/><line x1="1269.7" y1="640.0" x2="1275.4" y2="644.5"/><line x1="1367.7" y1="527.4" x2="1362.4" y2="532.9"/><line x1="1266.7" y1="607.3" x2="1277.4" y2="618.5"/><line x1="1218.8" y1="529.2" x2="1221.7" y2="536.4"/><line x1="1395.2" y1="546.4" x2="1407.4" y2="552.3"/><line x1="1288.9" y1="581.1" x2="1279.9" y2="607.5"/><line x1="1271.0" y1="554.1" x2="1268.3" y2="566.5"/><line x1="1241.6" y1="537.6" x2="1293.4" y2="573.2"/><line x1="1350.3" y1="576.0" x2="1301.1" y2="598.6"/><line x1="1283.9" y1="480.8" x2="1295.3" y2="485.4"/><line x1="1275.7" y1="469.1" x2="1283.9" y2="480.8"/><line x1="1295.3" y1="485.4" x2="1303.5" y2="485.4"/><line x1="1354.5" y1="528.0" x2="1367.7" y2="527.4"/></g><circle cx="1248.3" cy="406.4" r="1.30" fill="#ff3242"/><circle cx="1255.0" cy="402.9" r="1.30" fill="#ff3242"/><circle cx="1261.8" cy="405.6" r="1.30" fill="#ff3242"/><circle cx="1251.1" cy="416.9" r="1.30" fill="#ff3242"/><circle cx="1259.3" cy="416.1" r="1.30" fill="#ff3242"/><circle cx="1224.7" cy="430.3" r="2.53" fill="#c4c5cd"/><circle cx="1232.2" cy="429.0" r="2.17" fill="#c4c5cd"/><circle cx="1223.8" cy="437.5" r="2.89" fill="#c4c5cd"/><circle cx="1240.7" cy="437.7" r="2.17" fill="#c4c5cd"/><circle cx="1234.2" cy="443.0" r="1.99" fill="#c4c5cd"/><circle cx="1301.6" cy="434.8" r="3.61" fill="#c4c5cd"/><circle cx="1275.9" cy="440.5" r="1.45" fill="#c4c5cd"/><circle cx="1270.3" cy="449.1" r="1.45" fill="#c4c5cd"/><circle cx="1296.6" cy="452.4" r="1.81" fill="#c4c5cd"/><circle cx="1248.6" cy="458.9" r="1.30" fill="#c4c5cd"/><circle cx="1255.0" cy="459.3" r="1.45" fill="#c4c5cd"/><circle cx="1278.5" cy="459.6" r="1.45" fill="#c4c5cd"/><circle cx="1306.8" cy="457.9" r="1.30" fill="#c4c5cd"/><circle cx="1246.4" cy="464.8" r="1.30" fill="#c4c5cd"/><circle cx="1200.9" cy="468.6" r="1.99" fill="#c4c5cd"/><circle cx="1233.5" cy="473.5" r="1.81" fill="#c4c5cd"/><circle cx="1256.0" cy="469.8" r="1.30" fill="#c4c5cd"/><circle cx="1275.7" cy="469.1" r="1.99" fill="#c4c5cd"/><circle cx="1319.7" cy="470.0" r="3.25" fill="#c4c5cd"/><circle cx="1189.0" cy="478.8" r="2.17" fill="#c4c5cd"/><circle cx="1200.4" cy="478.3" r="1.63" fill="#c4c5cd"/><circle cx="1207.8" cy="478.0" r="1.30" fill="#c4c5cd"/><circle cx="1200.2" cy="484.9" r="2.89" fill="#c4c5cd"/><circle cx="1267.5" cy="477.5" r="2.53" fill="#c4c5cd"/><circle cx="1299.5" cy="473.3" r="1.30" fill="#c4c5cd"/><circle cx="1311.3" cy="480.2" r="3.61" fill="#c4c5cd"/><circle cx="1245.9" cy="482.0" r="1.30" fill="#c4c5cd"/><circle cx="1254.8" cy="485.0" r="1.30" fill="#c4c5cd"/><circle cx="1283.9" cy="480.8" r="1.30" fill="#c4c5cd"/><circle cx="1295.3" cy="485.4" r="1.63" fill="#c4c5cd"/><circle cx="1303.5" cy="485.4" r="1.63" fill="#c4c5cd"/><circle cx="1309.8" cy="488.9" r="1.30" fill="#c4c5cd"/><circle cx="1260.6" cy="493.2" r="1.45" fill="#c4c5cd"/><circle cx="1280.9" cy="493.7" r="1.30" fill="#c4c5cd"/><circle cx="1288.4" cy="492.1" r="1.30" fill="#c4c5cd"/><circle cx="1226.3" cy="497.4" r="1.63" fill="#c4c5cd"/><circle cx="1296.8" cy="501.8" r="1.30" fill="#c4c5cd"/><circle cx="1343.1" cy="502.9" r="1.45" fill="#c4c5cd"/><circle cx="1355.5" cy="480.3" r="2.17" fill="#c4c5cd"/><circle cx="1376.9" cy="473.5" r="1.63" fill="#c4c5cd"/><circle cx="1392.5" cy="487.4" r="1.63" fill="#c4c5cd"/><circle cx="1354.2" cy="491.4" r="1.45" fill="#c4c5cd"/><circle cx="1379.3" cy="494.1" r="1.63" fill="#c4c5cd"/><circle cx="1403.7" cy="495.7" r="2.17" fill="#c4c5cd"/><circle cx="1416.9" cy="499.4" r="1.63" fill="#c4c5cd"/><circle cx="1424.9" cy="498.8" r="1.81" fill="#c4c5cd"/><circle cx="1425.6" cy="506.8" r="1.99" fill="#c4c5cd"/><circle cx="1398.7" cy="510.8" r="1.99" fill="#c4c5cd"/><circle cx="1413.9" cy="514.5" r="1.45" fill="#c4c5cd"/><circle cx="1392.0" cy="515.8" r="1.30" fill="#c4c5cd"/><circle cx="1348.3" cy="513.8" r="2.35" fill="#c4c5cd"/><circle cx="1367.4" cy="513.8" r="2.17" fill="#c4c5cd"/><circle cx="1243.9" cy="505.4" r="3.07" fill="#c4c5cd"/><circle cx="1243.2" cy="518.3" r="3.43" fill="#c4c5cd"/><circle cx="1256.0" cy="516.8" r="1.30" fill="#c4c5cd"/><circle cx="1275.9" cy="516.7" r="1.30" fill="#c4c5cd"/><circle cx="1309.7" cy="516.8" r="1.30" fill="#c4c5cd"/><circle cx="1325.4" cy="519.0" r="1.99" fill="#c4c5cd"/><circle cx="1336.9" cy="522.7" r="1.99" fill="#c4c5cd"/><circle cx="1265.3" cy="525.5" r="1.63" fill="#c4c5cd"/><circle cx="1319.7" cy="528.9" r="1.63" fill="#c4c5cd"/><circle cx="1354.5" cy="528.0" r="2.17" fill="#c4c5cd"/><circle cx="1367.7" cy="527.4" r="2.89" fill="#c4c5cd"/><circle cx="1386.6" cy="526.4" r="1.45" fill="#c4c5cd"/><circle cx="1418.6" cy="527.7" r="1.45" fill="#c4c5cd"/><circle cx="1218.8" cy="529.2" r="1.45" fill="#c4c5cd"/><circle cx="1286.4" cy="517.2" r="4" fill="#c8ebff"/><circle cx="1286.4" cy="517.2" r="1.80" fill="#2bb3ff"/><circle cx="1305.0" cy="524.3" r="1.30" fill="#ff3242"/><circle cx="1362.4" cy="532.9" r="1.99" fill="#c4c5cd"/><circle cx="1378.8" cy="531.7" r="2.71" fill="#c4c5cd"/><circle cx="1370.1" cy="536.7" r="2.17" fill="#c4c5cd"/><circle cx="1238.4" cy="531.4" r="1.63" fill="#c4c5cd"/><circle cx="1214.5" cy="536.9" r="2.89" fill="#c4c5cd"/><circle cx="1221.7" cy="536.4" r="1.45" fill="#c4c5cd"/><circle cx="1231.7" cy="536.9" r="1.30" fill="#c4c5cd"/><circle cx="1241.6" cy="537.6" r="1.81" fill="#c4c5cd"/><circle cx="1261.3" cy="533.9" r="3.43" fill="#c4c5cd"/><circle cx="1284.1" cy="541.4" r="3.43" fill="#c4c5cd"/><circle cx="1299.8" cy="544.9" r="1.99" fill="#c4c5cd"/><circle cx="1335.4" cy="533.7" r="3.61" fill="#c4c5cd"/><circle cx="1333.3" cy="542.9" r="2.89" fill="#c4c5cd"/><circle cx="1354.3" cy="544.4" r="2.35" fill="#c4c5cd"/><circle cx="1369.9" cy="550.5" r="3.07" fill="#c4c5cd"/><circle cx="1403.4" cy="539.1" r="1.30" fill="#c4c5cd"/><circle cx="1395.2" cy="546.4" r="1.63" fill="#c4c5cd"/><circle cx="1411.4" cy="546.3" r="1.81" fill="#c4c5cd"/><circle cx="1407.4" cy="552.3" r="1.81" fill="#c4c5cd"/><circle cx="1219.7" cy="542.8" r="1.45" fill="#c4c5cd"/><circle cx="1262.1" cy="545.8" r="1.45" fill="#c4c5cd"/><circle cx="1311.0" cy="546.9" r="1.30" fill="#c4c5cd"/><circle cx="1312.5" cy="552.3" r="1.30" fill="#c4c5cd"/><circle cx="1336.9" cy="553.1" r="1.63" fill="#c4c5cd"/><circle cx="1237.9" cy="549.3" r="1.63" fill="#c4c5cd"/><circle cx="1212.6" cy="554.3" r="2.89" fill="#c4c5cd"/><circle cx="1254.5" cy="554.3" r="1.63" fill="#c4c5cd"/><circle cx="1271.0" cy="554.1" r="1.45" fill="#00b98b"/><circle cx="1283.4" cy="559.7" r="2.53" fill="#c4c5cd"/><circle cx="1347.3" cy="562.3" r="1.45" fill="#c4c5cd"/><circle cx="1358.7" cy="560.7" r="1.99" fill="#c4c5cd"/><circle cx="1233.9" cy="564.8" r="2.17" fill="#c4c5cd"/><circle cx="1250.6" cy="566.2" r="3.61" fill="#c4c5cd"/><circle cx="1268.3" cy="566.5" r="2.35" fill="#c4c5cd"/><circle cx="1319.5" cy="568.4" r="2.89" fill="#c4c5cd"/><circle cx="1332.4" cy="566.3" r="1.63" fill="#c4c5cd"/><circle cx="1293.4" cy="573.2" r="1.45" fill="#c4c5cd"/><circle cx="1340.1" cy="573.0" r="1.99" fill="#c4c5cd"/><circle cx="1350.3" cy="576.0" r="1.81" fill="#c4c5cd"/><circle cx="1360.0" cy="581.4" r="1.63" fill="#c4c5cd"/><circle cx="1219.8" cy="577.1" r="1.99" fill="#c4c5cd"/><circle cx="1222.7" cy="582.9" r="2.71" fill="#c4c5cd"/><circle cx="1235.2" cy="582.7" r="2.35" fill="#c4c5cd"/><circle cx="1249.8" cy="584.4" r="2.35" fill="#c4c5cd"/><circle cx="1265.7" cy="588.6" r="1.30" fill="#c4c5cd"/><circle cx="1288.9" cy="581.1" r="1.30" fill="#c4c5cd"/><circle cx="1306.7" cy="583.7" r="3.61" fill="#c4c5cd"/><circle cx="1321.0" cy="583.1" r="2.71" fill="#c4c5cd"/><circle cx="1331.9" cy="586.1" r="1.30" fill="#c4c5cd"/><circle cx="1342.5" cy="588.1" r="1.30" fill="#c4c5cd"/><circle cx="1355.3" cy="593.4" r="1.63" fill="#c4c5cd"/><circle cx="1301.1" cy="598.6" r="1.81" fill="#c4c5cd"/><circle cx="1307.7" cy="600.0" r="2.17" fill="#c4c5cd"/><circle cx="1266.7" cy="607.3" r="1.45" fill="#c4c5cd"/><circle cx="1279.9" cy="607.5" r="1.63" fill="#c4c5cd"/><circle cx="1313.7" cy="614.9" r="2.71" fill="#c4c5cd"/><circle cx="1256.8" cy="621.9" r="1.45" fill="#00b98b"/><circle cx="1264.8" cy="627.2" r="1.45" fill="#00b98b"/><circle cx="1277.4" cy="618.5" r="1.45" fill="#c4c5cd"/><circle cx="1285.4" cy="625.6" r="1.63" fill="#c4c5cd"/><circle cx="1274.9" cy="627.1" r="1.30" fill="#c4c5cd"/><circle cx="1306.3" cy="626.4" r="1.45" fill="#c4c5cd"/><circle cx="1296.3" cy="632.4" r="1.63" fill="#c4c5cd"/><circle cx="1283.7" cy="634.8" r="1.30" fill="#c4c5cd"/><circle cx="1269.7" cy="640.0" r="1.30" fill="#c4c5cd"/><circle cx="1286.9" cy="640.8" r="1.30" fill="#c4c5cd"/><circle cx="1298.0" cy="641.8" r="1.99" fill="#c4c5cd"/><circle cx="1311.7" cy="640.5" r="1.63" fill="#c4c5cd"/><circle cx="1275.4" cy="644.5" r="2.71" fill="#c4c5cd"/><circle cx="1283.9" cy="648.2" r="1.30" fill="#c4c5cd"/><circle cx="1303.3" cy="648.3" r="1.63" fill="#c4c5cd"/></svg>
<div class="t" style="left:1286.5px;transform:translateX(-50%);top:500.91px;font-size:13.26px;line-height:15px;color:#008ff8;font-weight:700;letter-spacing:0.0px;text-shadow:0 0 2px #fff,0 0 2px #fff,0 0 1px #fff;">ceradiam.com</div>
<div class="card" style="left:9px;top:709px;width:761px;height:319px"></div>
<div class="a" style="left:10px;top:749px;width:761px;height:1px;background:#e3e4ea"></div>
<div class="t" style="left:30px;top:720.89px;font-size:16.20px;line-height:19px;color:#171a22;font-weight:700;letter-spacing:0.0px;">Referring Domains</div>
<svg class="a" style="left:186px;top:724px" width="9" height="13" viewBox="-1 0 9 13"><circle cx="3.5" cy="1.6" r="1.3" fill="#a8a9b5"/><path d="M0.2 4.9 H3.2 L2.2 9.6 Q1.9 11 3.2 11 H5.8" fill="none" stroke="#a8a9b5" stroke-width="1.6" stroke-linejoin="round"/></svg>
<div class="t" style="left:664px;top:776.38px;font-size:14.77px;line-height:17px;color:#171a22;font-weight:400;letter-spacing:0.0px;">1Y</div>
<div class="a" style="left:663px;top:796px;width:18px;height:3px;background:#006dca"></div>
<div class="t" style="left:697px;top:777.15px;font-size:14.00px;line-height:16px;color:#171a22;font-weight:400;letter-spacing:0.45px;">All Time</div>
<svg class="a" style="left:0;top:0" width="1554" height="1040" viewBox="0 0 1554 1040"><line x1="100" y1="846" x2="731" y2="846" stroke="#e6e7ec" stroke-width="1"/><line x1="100" y1="872.2" x2="731" y2="872.2" stroke="#e6e7ec" stroke-width="1"/><line x1="100" y1="898.4" x2="731" y2="898.4" stroke="#e6e7ec" stroke-width="1"/><line x1="100" y1="924.6" x2="731" y2="924.6" stroke="#e6e7ec" stroke-width="1"/><polygon points="100.5,951 100.5,951.0 215.0,951.0 271.0,941.5 331.0,934.5 391.0,927.0 441.0,917.5 501.0,873.0 557.0,853.0 615.0,845.0 672.0,838.0 731.0,836.5 731.0,951" fill="#2bb3ff" fill-opacity="0.22"/><line x1="100" y1="951" x2="731" y2="951" stroke="#c4c7cf" stroke-width="1"/><polyline points="100.5,951.0 215.0,951.0 271.0,941.5 331.0,934.5 391.0,927.0 441.0,917.5 501.0,873.0 557.0,853.0 615.0,845.0 672.0,838.0 731.0,836.5" fill="none" stroke="#2bb3ff" stroke-width="3" stroke-linejoin="round"/></svg>
<div class="t" style="right:1470px;top:838.11px;font-size:12.66px;line-height:15px;color:#6c6e79;font-weight:400;letter-spacing:0.0px;">63</div>
<div class="t" style="right:1470px;top:864.31px;font-size:12.66px;line-height:15px;color:#6c6e79;font-weight:400;letter-spacing:0.0px;">50</div>
<div class="t" style="right:1470px;top:890.51px;font-size:12.66px;line-height:15px;color:#6c6e79;font-weight:400;letter-spacing:0.0px;">37</div>
<div class="t" style="right:1470px;top:916.71px;font-size:12.66px;line-height:15px;color:#6c6e79;font-weight:400;letter-spacing:0.0px;">24</div>
<div class="t" style="right:1470px;top:942.91px;font-size:12.66px;line-height:15px;color:#6c6e79;font-weight:400;letter-spacing:0.0px;">11</div>
<div class="t" style="left:108px;transform:translateX(-50%);top:962.11px;font-size:12.66px;line-height:15px;color:#6c6e79;font-weight:400;letter-spacing:0.0px;">Sep 2024</div>
<div class="t" style="left:261px;transform:translateX(-50%);top:962.11px;font-size:12.66px;line-height:15px;color:#6c6e79;font-weight:400;letter-spacing:0.0px;">Nov 2024</div>
<div class="t" style="left:414.5px;transform:translateX(-50%);top:962.11px;font-size:12.66px;line-height:15px;color:#6c6e79;font-weight:400;letter-spacing:0.0px;">Feb 2025</div>
<div class="t" style="left:567.5px;transform:translateX(-50%);top:962.11px;font-size:12.66px;line-height:15px;color:#6c6e79;font-weight:400;letter-spacing:0.0px;">May 2025</div>
<div class="t" style="left:721px;transform:translateX(-50%);top:962.11px;font-size:12.66px;line-height:15px;color:#6c6e79;font-weight:400;letter-spacing:0.0px;">Aug 2025</div>
<div class="card" style="left:786px;top:709px;width:761px;height:319px"></div>
<div class="a" style="left:787px;top:749px;width:761px;height:1px;background:#e3e4ea"></div>
<div class="t" style="left:807px;top:720.89px;font-size:16.20px;line-height:19px;color:#171a22;font-weight:700;letter-spacing:0.0px;">Backlinks</div>
<svg class="a" style="left:894px;top:724px" width="9" height="13" viewBox="-1 0 9 13"><circle cx="3.5" cy="1.6" r="1.3" fill="#a8a9b5"/><path d="M0.2 4.9 H3.2 L2.2 9.6 Q1.9 11 3.2 11 H5.8" fill="none" stroke="#a8a9b5" stroke-width="1.6" stroke-linejoin="round"/></svg>
<div class="t" style="left:1441px;top:776.38px;font-size:14.77px;line-height:17px;color:#171a22;font-weight:400;letter-spacing:0.0px;">1Y</div>
<div class="a" style="left:1440px;top:796px;width:18px;height:3px;background:#006dca"></div>
<div class="t" style="left:1474px;top:777.15px;font-size:14.00px;line-height:16px;color:#171a22;font-weight:400;letter-spacing:0.45px;">All Time</div>
<svg class="a" style="left:0;top:0" width="1554" height="1040" viewBox="0 0 1554 1040"><line x1="877" y1="848" x2="1508" y2="848" stroke="#e6e7ec" stroke-width="1"/><line x1="877" y1="873.7" x2="1508" y2="873.7" stroke="#e6e7ec" stroke-width="1"/><line x1="877" y1="899.4" x2="1508" y2="899.4" stroke="#e6e7ec" stroke-width="1"/><line x1="877" y1="925.1" x2="1508" y2="925.1" stroke="#e6e7ec" stroke-width="1"/><polygon points="877.5,951 877.5,951.2 934.0,949.2 992.0,949.2 1049.0,940.2 1107.0,931.2 1164.0,917.7 1219.0,904.7 1278.0,861.7 1334.0,846.7 1392.0,839.7 1449.0,836.2 1508.0,846.7 1508.0,951" fill="#2bb3ff" fill-opacity="0.22"/><line x1="877" y1="951" x2="1508" y2="951" stroke="#c4c7cf" stroke-width="1"/><polyline points="877.5,951.2 934.0,949.2 992.0,949.2 1049.0,940.2 1107.0,931.2 1164.0,917.7 1219.0,904.7 1278.0,861.7 1334.0,846.7 1392.0,839.7 1449.0,836.2 1508.0,846.7" fill="none" stroke="#2bb3ff" stroke-width="3" stroke-linejoin="round"/></svg>
<div class="t" style="right:693px;top:840.11px;font-size:12.66px;line-height:15px;color:#6c6e79;font-weight:400;letter-spacing:0.0px;">72</div>
<div class="t" style="right:693px;top:865.91px;font-size:12.66px;line-height:15px;color:#6c6e79;font-weight:400;letter-spacing:0.0px;">57</div>
<div class="t" style="right:693px;top:891.71px;font-size:12.66px;line-height:15px;color:#6c6e79;font-weight:400;letter-spacing:0.0px;">42</div>
<div class="t" style="right:693px;top:917.51px;font-size:12.66px;line-height:15px;color:#6c6e79;font-weight:400;letter-spacing:0.0px;">27</div>
<div class="t" style="right:693px;top:943.31px;font-size:12.66px;line-height:15px;color:#6c6e79;font-weight:400;letter-spacing:0.0px;">12</div>
<div class="t" style="left:885px;transform:translateX(-50%);top:962.11px;font-size:12.66px;line-height:15px;color:#6c6e79;font-weight:400;letter-spacing:0.0px;">Sep 2024</div>
<div class="t" style="left:1038px;transform:translateX(-50%);top:962.11px;font-size:12.66px;line-height:15px;color:#6c6e79;font-weight:400;letter-spacing:0.0px;">Nov 2024</div>
<div class="t" style="left:1191.5px;transform:translateX(-50%);top:962.11px;font-size:12.66px;line-height:15px;color:#6c6e79;font-weight:400;letter-spacing:0.0px;">Feb 2025</div>
<div class="t" style="left:1344.5px;transform:translateX(-50%);top:962.11px;font-size:12.66px;line-height:15px;color:#6c6e79;font-weight:400;letter-spacing:0.0px;">May 2025</div>
<div class="t" style="left:1498px;transform:translateX(-50%);top:962.11px;font-size:12.66px;line-height:15px;color:#6c6e79;font-weight:400;letter-spacing:0.0px;">Aug 2025</div>
<div class="card" style="left:9px;top:1044px;width:761px;height:347px"></div>
<div class="a" style="left:10px;top:1084px;width:761px;height:1px;background:#e3e4ea"></div>
<div class="t" style="left:30px;top:1055.89px;font-size:16.20px;line-height:19px;color:#171a22;font-weight:700;letter-spacing:0.0px;">New and Lost Referring Domains</div>
<svg class="a" style="left:295px;top:1059px" width="9" height="13" viewBox="-1 0 9 13"><circle cx="3.5" cy="1.6" r="1.3" fill="#a8a9b5"/><path d="M0.2 4.9 H3.2 L2.2 9.6 Q1.9 11 3.2 11 H5.8" fill="none" stroke="#a8a9b5" stroke-width="1.6" stroke-linejoin="round"/></svg>
<div class="a" style="left:30px;top:1107px;width:16px;height:16px;border-radius:3px;background:#2bb3ff"></div>
<svg class="a" style="left:30px;top:1107px" width="16" height="16" viewBox="0 0 16 16"><path d="M4.5 8.2 L7 10.6 L11.5 5.6" fill="none" stroke="#fff" stroke-width="1.8" stroke-linecap="round" stroke-linejoin="round"/></svg>
<div class="t" style="left:54px;top:1107.38px;font-size:14.77px;line-height:17px;color:#171a22;font-weight:400;letter-spacing:0.0px;">New</div>
<div class="a" style="left:96px;top:1107px;width:16px;height:16px;border-radius:3px;background:#ff642d"></div>
<svg class="a" style="left:96px;top:1107px" width="16" height="16" viewBox="0 0 16 16"><path d="M4.5 8.2 L7 10.6 L11.5 5.6" fill="none" stroke="#fff" stroke-width="1.8" stroke-linecap="round" stroke-linejoin="round"/></svg>
<div class="t" style="left:120px;top:1107.38px;font-size:14.77px;line-height:17px;color:#171a22;font-weight:400;letter-spacing:0.0px;">Lost</div>
<div class="t" style="right:803px;top:1107.38px;font-size:14.77px;line-height:17px;color:#6c6e79;font-weight:400;letter-spacing:0.0px;">Last 6 months</div>
<svg class="a" style="left:0;top:0" width="1554" height="1399" viewBox="0 0 1554 1399"><line x1="100" y1="1158.5" x2="731" y2="1158.5" stroke="#e6e7ec" stroke-width="1"/><line x1="100" y1="1192.5" x2="731" y2="1192.5" stroke="#e6e7ec" stroke-width="1"/><line x1="100" y1="1226.5" x2="731" y2="1226.5" stroke="#e6e7ec" stroke-width="1"/><line x1="100" y1="1260.5" x2="731" y2="1260.5" stroke="#e6e7ec" stroke-width="1"/><line x1="100" y1="1294" x2="731" y2="1294" stroke="#d5d6dd" stroke-width="2"/><path d="M106.0 1260 V1252.0 Q106.0 1250.5 107.5 1250.5 H127.1 Q128.6 1250.5 128.6 1252.0 V1260 Z" fill="#2bb3ff"/><path d="M134.4 1260 V1242.5 Q134.4 1241.0 135.9 1241.0 H155.5 Q157.0 1241.0 157.0 1242.5 V1260 Z" fill="#2bb3ff"/><path d="M162.8 1260 V1242.5 Q162.8 1241.0 164.3 1241.0 H183.9 Q185.4 1241.0 185.4 1242.5 V1260 Z" fill="#2bb3ff"/><path d="M191.2 1260 V1242.5 Q191.2 1241.0 192.7 1241.0 H212.3 Q213.8 1241.0 213.8 1242.5 V1260 Z" fill="#2bb3ff"/><path d="M219.6 1260 V1154.5 Q219.6 1153.0 221.1 1153.0 H240.7 Q242.2 1153.0 242.2 1154.5 V1260 Z" fill="#2bb3ff"/><path d="M248.0 1260 V1213.0 Q248.0 1211.5 249.5 1211.5 H269.1 Q270.6 1211.5 270.6 1213.0 V1260 Z" fill="#2bb3ff"/><path d="M276.4 1260 V1213.0 Q276.4 1211.5 277.9 1211.5 H297.5 Q299.0 1211.5 299.0 1213.0 V1260 Z" fill="#2bb3ff"/><path d="M304.8 1260 V1232.5 Q304.8 1231.0 306.3 1231.0 H325.9 Q327.4 1231.0 327.4 1232.5 V1260 Z" fill="#2bb3ff"/><path d="M333.2 1260 V1232.5 Q333.2 1231.0 334.7 1231.0 H354.3 Q355.8 1231.0 355.8 1232.5 V1260 Z" fill="#2bb3ff"/><path d="M361.6 1260 V1252.0 Q361.6 1250.5 363.1 1250.5 H382.7 Q384.2 1250.5 384.2 1252.0 V1260 Z" fill="#2bb3ff"/><path d="M390.0 1260 V1223.0 Q390.0 1221.5 391.5 1221.5 H411.1 Q412.6 1221.5 412.6 1223.0 V1260 Z" fill="#2bb3ff"/><path d="M418.4 1260 V1252.0 Q418.4 1250.5 419.9 1250.5 H439.5 Q441.0 1250.5 441.0 1252.0 V1260 Z" fill="#2bb3ff"/><path d="M446.8 1260 V1232.5 Q446.8 1231.0 448.3 1231.0 H467.9 Q469.4 1231.0 469.4 1232.5 V1260 Z" fill="#2bb3ff"/><path d="M475.2 1260 V1252.0 Q475.2 1250.5 476.7 1250.5 H496.3 Q497.8 1250.5 497.8 1252.0 V1260 Z" fill="#2bb3ff"/><path d="M503.6 1260 V1252.0 Q503.6 1250.5 505.1 1250.5 H524.7 Q526.2 1250.5 526.2 1252.0 V1260 Z" fill="#2bb3ff"/><path d="M532.0 1260 V1242.5 Q532.0 1241.0 533.5 1241.0 H553.1 Q554.6 1241.0 554.6 1242.5 V1260 Z" fill="#2bb3ff"/><path d="M674.0 1260 V1252.0 Q674.0 1250.5 675.5 1250.5 H695.1 Q696.6 1250.5 696.6 1252.0 V1260 Z" fill="#2bb3ff"/><path d="M162.8 1260 V1268.5 Q162.8 1270 164.3 1270 H183.9 Q185.4 1270 185.4 1268.5 V1260 Z" fill="#ff642d"/></svg>
<div class="t" style="right:1470px;top:1151.11px;font-size:12.66px;line-height:15px;color:#6c6e79;font-weight:400;letter-spacing:0.0px;">10</div>
<div class="t" style="right:1470px;top:1185.11px;font-size:12.66px;line-height:15px;color:#6c6e79;font-weight:400;letter-spacing:0.0px;">7</div>
<div class="t" style="right:1470px;top:1219.11px;font-size:12.66px;line-height:15px;color:#6c6e79;font-weight:400;letter-spacing:0.0px;">3</div>
<div class="t" style="right:1470px;top:1253.11px;font-size:12.66px;line-height:15px;color:#6c6e79;font-weight:400;letter-spacing:0.0px;">0</div>
<div class="t" style="right:1470px;top:1286.11px;font-size:12.66px;line-height:15px;color:#6c6e79;font-weight:400;letter-spacing:0.0px;">-3</div>
<div class="t" style="left:117px;transform:translateX(-50%);top:1305.11px;font-size:12.66px;line-height:15px;color:#6c6e79;font-weight:400;letter-spacing:0.0px;">Mar 3</div>
<div class="t" style="left:230.5px;transform:translateX(-50%);top:1305.11px;font-size:12.66px;line-height:15px;color:#6c6e79;font-weight:400;letter-spacing:0.0px;">Apr 7</div>
<div class="t" style="left:344.5px;transform:translateX(-50%);top:1305.11px;font-size:12.66px;line-height:15px;color:#6c6e79;font-weight:400;letter-spacing:0.0px;">May 5</div>
<div class="t" style="left:458px;transform:translateX(-50%);top:1305.11px;font-size:12.66px;line-height:15px;color:#6c6e79;font-weight:400;letter-spacing:0.0px;">Jun 16</div>
<div class="t" style="left:571.5px;transform:translateX(-50%);top:1305.11px;font-size:12.66px;line-height:15px;color:#6c6e79;font-weight:400;letter-spacing:0.0px;">Jul 14</div>
<div class="t" style="left:685.5px;transform:translateX(-50%);top:1305.11px;font-size:12.66px;line-height:15px;color:#6c6e79;font-weight:400;letter-spacing:0.0px;">Aug 11</div>
<div class="a" style="left:30px;top:1344px;width:120px;height:28px;border-radius:6px;background:#008ff8"></div>
<div class="t" style="left:90px;transform:translateX(-50%);top:1350.05px;font-size:14.28px;line-height:16px;color:#fff;font-weight:700;letter-spacing:0.0px;">View full report</div>
<div class="card" style="left:786px;top:1044px;width:761px;height:347px"></div>
<div class="a" style="left:787px;top:1084px;width:761px;height:1px;background:#e3e4ea"></div>
<div class="t" style="left:807px;top:1055.89px;font-size:16.20px;line-height:19px;color:#171a22;font-weight:700;letter-spacing:0.0px;">New and Lost Backlinks</div>
<svg class="a" style="left:1003px;top:1059px" width="9" height="13" viewBox="-1 0 9 13"><circle cx="3.5" cy="1.6" r="1.3" fill="#a8a9b5"/><path d="M0.2 4.9 H3.2 L2.2 9.6 Q1.9 11 3.2 11 H5.8" fill="none" stroke="#a8a9b5" stroke-width="1.6" stroke-linejoin="round"/></svg>
<div class="a" style="left:807px;top:1107px;width:16px;height:16px;border-radius:3px;background:#2bb3ff"></div>
<svg class="a" style="left:807px;top:1107px" width="16" height="16" viewBox="0 0 16 16"><path d="M4.5 8.2 L7 10.6 L11.5 5.6" fill="none" stroke="#fff" stroke-width="1.8" stroke-linecap="round" stroke-linejoin="round"/></svg>
<div class="t" style="left:831px;top:1107.38px;font-size:14.77px;line-height:17px;color:#171a22;font-weight:400;letter-spacing:0.0px;">New</div>
<div class="a" style="left:873px;top:1107px;width:16px;height:16px;border-radius:3px;background:#ff642d"></div>
<svg class="a" style="left:873px;top:1107px" width="16" height="16" viewBox="0 0 16 16"><path d="M4.5 8.2 L7 10.6 L11.5 5.6" fill="none" stroke="#fff" stroke-width="1.8" stroke-linecap="round" stroke-linejoin="round"/></svg>
<div class="t" style="left:897px;top:1107.38px;font-size:14.77px;line-height:17px;color:#171a22;font-weight:400;letter-spacing:0.0px;">Lost</div>
<div class="t" style="right:26px;top:1107.38px;font-size:14.77px;line-height:17px;color:#6c6e79;font-weight:400;letter-spacing:0.0px;">Last 6 months</div>
<svg class="a" style="left:0;top:0" width="1554" height="1399" viewBox="0 0 1554 1399"><line x1="877" y1="1158.5" x2="1508" y2="1158.5" stroke="#e6e7ec" stroke-width="1"/><line x1="877" y1="1192.5" x2="1508" y2="1192.5" stroke="#e6e7ec" stroke-width="1"/><line x1="877" y1="1226.5" x2="1508" y2="1226.5" stroke="#e6e7ec" stroke-width="1"/><line x1="877" y1="1260.5" x2="1508" y2="1260.5" stroke="#e6e7ec" stroke-width="1"/><line x1="877" y1="1294" x2="1508" y2="1294" stroke="#d5d6dd" stroke-width="2"/><path d="M883.0 1260 V1252.0 Q883.0 1250.5 884.5 1250.5 H904.1 Q905.6 1250.5 905.6 1252.0 V1260 Z" fill="#2bb3ff"/><path d="M911.4 1260 V1223.0 Q911.4 1221.5 912.9 1221.5 H932.5 Q934.0 1221.5 934.0 1223.0 V1260 Z" fill="#2bb3ff"/><path d="M939.8 1260 V1242.5 Q939.8 1241.0 941.3 1241.0 H960.9 Q962.4 1241.0 962.4 1242.5 V1260 Z" fill="#2bb3ff"/><path d="M968.2 1260 V1242.5 Q968.2 1241.0 969.7 1241.0 H989.3 Q990.8 1241.0 990.8 1242.5 V1260 Z" fill="#2bb3ff"/><path d="M996.6 1260 V1154.5 Q996.6 1153.0 998.1 1153.0 H1017.7 Q1019.2 1153.0 1019.2 1154.5 V1260 Z" fill="#2bb3ff"/><path d="M1025.0 1260 V1203.5 Q1025.0 1202.0 1026.5 1202.0 H1046.1 Q1047.6 1202.0 1047.6 1203.5 V1260 Z" fill="#2bb3ff"/><path d="M1053.4 1260 V1203.5 Q1053.4 1202.0 1054.9 1202.0 H1074.5 Q1076.0 1202.0 1076.0 1203.5 V1260 Z" fill="#2bb3ff"/><path d="M1081.8 1260 V1232.5 Q1081.8 1231.0 1083.3 1231.0 H1102.9 Q1104.4 1231.0 1104.4 1232.5 V1260 Z" fill="#2bb3ff"/><path d="M1110.2 1260 V1232.5 Q1110.2 1231.0 1111.7 1231.0 H1131.3 Q1132.8 1231.0 1132.8 1232.5 V1260 Z" fill="#2bb3ff"/><path d="M1138.6 1260 V1252.0 Q1138.6 1250.5 1140.1 1250.5 H1159.7 Q1161.2 1250.5 1161.2 1252.0 V1260 Z" fill="#2bb3ff"/><path d="M1167.0 1260 V1223.0 Q1167.0 1221.5 1168.5 1221.5 H1188.1 Q1189.6 1221.5 1189.6 1223.0 V1260 Z" fill="#2bb3ff"/><path d="M1195.4 1260 V1252.0 Q1195.4 1250.5 1196.9 1250.5 H1216.5 Q1218.0 1250.5 1218.0 1252.0 V1260 Z" fill="#2bb3ff"/><path d="M1223.8 1260 V1232.5 Q1223.8 1231.0 1225.3 1231.0 H1244.9 Q1246.4 1231.0 1246.4 1232.5 V1260 Z" fill="#2bb3ff"/><path d="M1252.2 1260 V1252.0 Q1252.2 1250.5 1253.7 1250.5 H1273.3 Q1274.8 1250.5 1274.8 1252.0 V1260 Z" fill="#2bb3ff"/><path d="M1280.6 1260 V1252.0 Q1280.6 1250.5 1282.1 1250.5 H1301.7 Q1303.2 1250.5 1303.2 1252.0 V1260 Z" fill="#2bb3ff"/><path d="M1309.0 1260 V1242.5 Q1309.0 1241.0 1310.5 1241.0 H1330.1 Q1331.6 1241.0 1331.6 1242.5 V1260 Z" fill="#2bb3ff"/><path d="M1451.0 1260 V1252.0 Q1451.0 1250.5 1452.5 1250.5 H1472.1 Q1473.6 1250.5 1473.6 1252.0 V1260 Z" fill="#2bb3ff"/><path d="M939.8 1260 V1268.5 Q939.8 1270 941.3 1270 H960.9 Q962.4 1270 962.4 1268.5 V1260 Z" fill="#ff642d"/></svg>
<div class="t" style="right:693px;top:1151.11px;font-size:12.66px;line-height:15px;color:#6c6e79;font-weight:400;letter-spacing:0.0px;">10</div>
<div class="t" style="right:693px;top:1185.11px;font-size:12.66px;line-height:15px;color:#6c6e79;font-weight:400;letter-spacing:0.0px;">7</div>
<div class="t" style="right:693px;top:1219.11px;font-size:12.66px;line-height:15px;color:#6c6e79;font-weight:400;letter-spacing:0.0px;">3</div>
<div class="t" style="right:693px;top:1253.11px;font-size:12.66px;line-height:15px;color:#6c6e79;font-weight:400;letter-spacing:0.0px;">0</div>
<div class="t" style="right:693px;top:1286.11px;font-size:12.66px;line-height:15px;color:#6c6e79;font-weight:400;letter-spacing:0.0px;">-3</div>
<div class="t" style="left:894px;transform:translateX(-50%);top:1305.11px;font-size:12.66px;line-height:15px;color:#6c6e79;font-weight:400;letter-spacing:0.0px;">Mar 3</div>
<div class="t" style="left:1007.5px;transform:translateX(-50%);top:1305.11px;font-size:12.66px;line-height:15px;color:#6c6e79;font-weight:400;letter-spacing:0.0px;">Apr 7</div>
<div class="t" style="left:1121.5px;transform:translateX(-50%);top:1305.11px;font-size:12.66px;line-height:15px;color:#6c6e79;font-weight:400;letter-spacing:0.0px;">May 5</div>
<div class="t" style="left:1235px;transform:translateX(-50%);top:1305.11px;font-size:12.66px;line-height:15px;color:#6c6e79;font-weight:400;letter-spacing:0.0px;">Jun 16</div>
<div class="t" style="left:1348.5px;transform:translateX(-50%);top:1305.11px;font-size:12.66px;line-height:15px;color:#6c6e79;font-weight:400;letter-spacing:0.0px;">Jul 14</div>
<div class="t" style="left:1462.5px;transform:translateX(-50%);top:1305.11px;font-size:12.66px;line-height:15px;color:#6c6e79;font-weight:400;letter-spacing:0.0px;">Aug 11</div>
<div class="a" style="left:807px;top:1344px;width:120px;height:28px;border-radius:6px;background:#008ff8"></div>
<div class="t" style="left:867px;transform:translateX(-50%);top:1350.05px;font-size:14.28px;line-height:16px;color:#fff;font-weight:700;letter-spacing:0.0px;">View full report</div>
</body></html>
